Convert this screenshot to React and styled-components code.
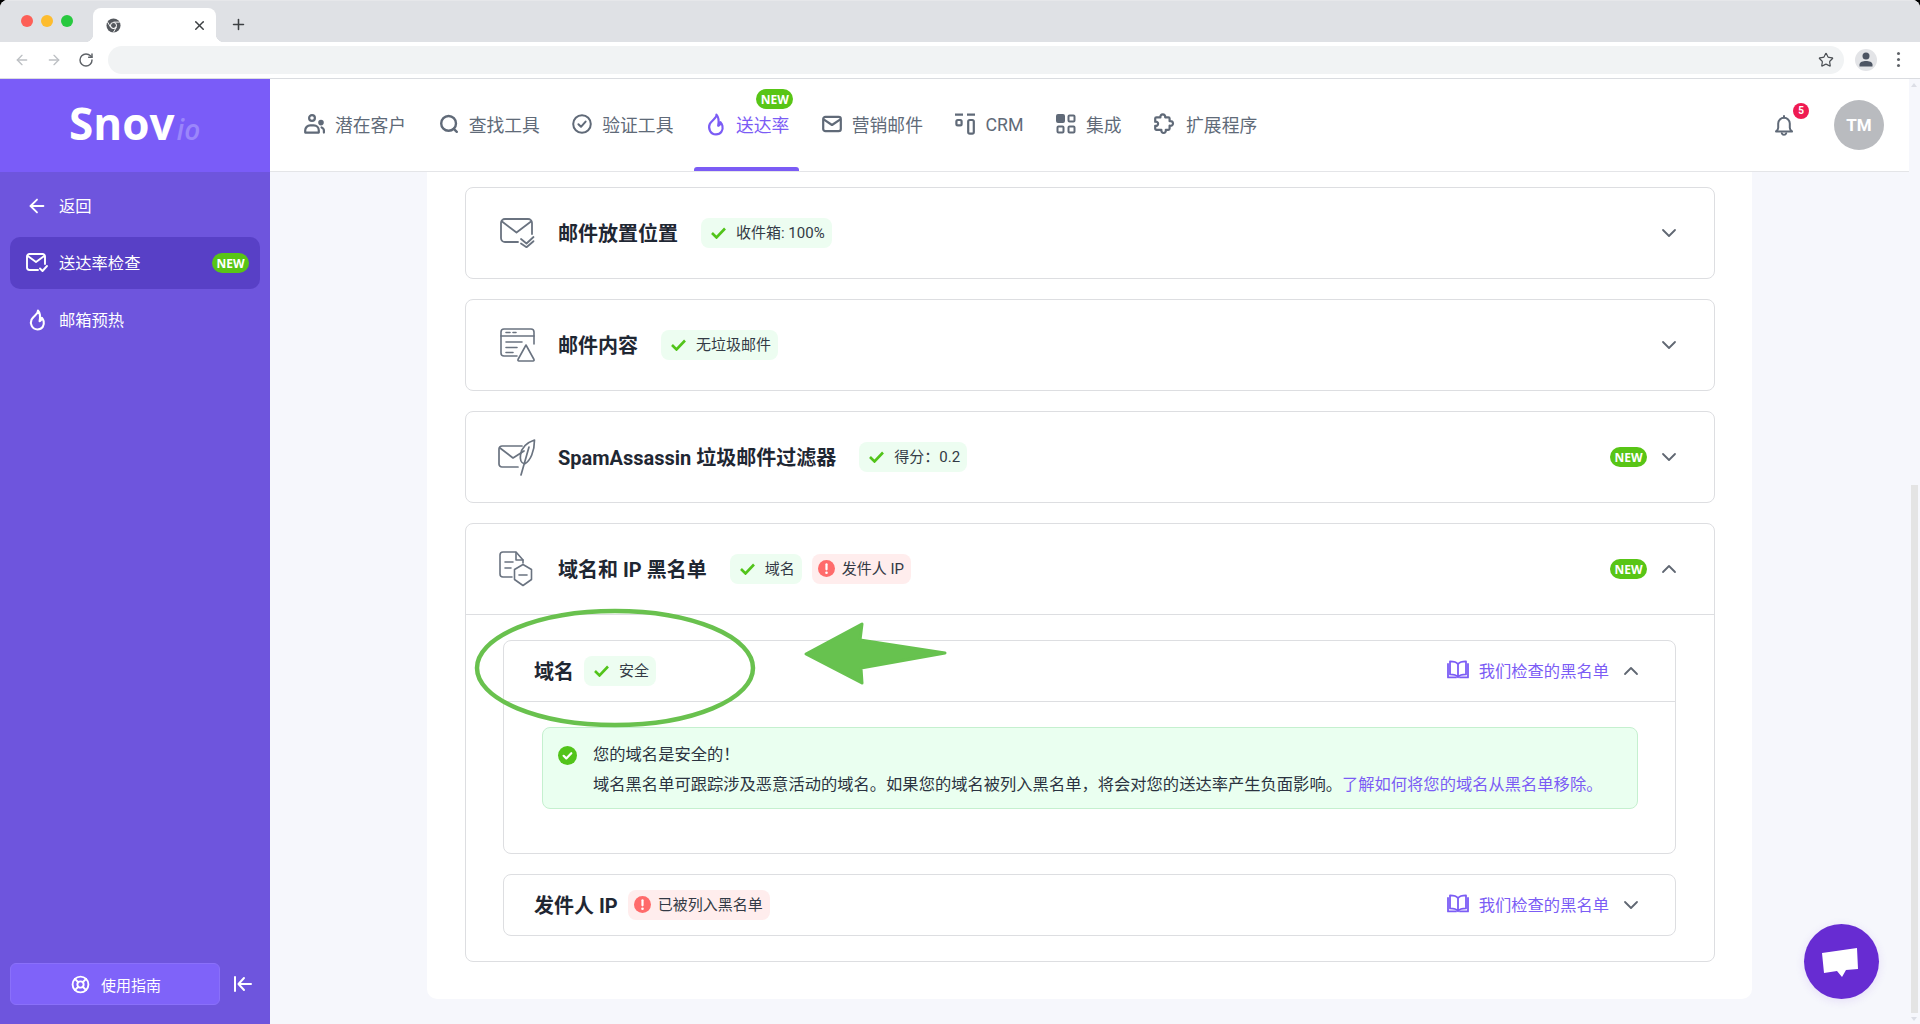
import React from "react";
import styled, { createGlobalStyle } from "styled-components";
import {
  ArrowLeft,
  ChevronDown,
  ChevronUp,
  LifeBuoy,
  Plus,
  RotateCw,
  Star,
  X,
} from "lucide-react";

const GlobalStyle = createGlobalStyle`
  html, body {
    margin: 0;
    padding: 0;
    background: #000;
    overflow: hidden;
  }
  body {
    font-family: Roboto, "Noto Sans CJK SC", "Noto Sans", sans-serif;
    color: #1f2733;
  }
  * { box-sizing: border-box; }
`;

const Window = styled.div`
  position: relative;
  width: 1920px;
  height: 1024px;
  display: flex;
  flex-direction: column;
  overflow: hidden;
  border-radius: 8px 8px 0 0;
  background: #fff;
`;

/* browser chrome */
const TabStrip = styled.div`
  height: 42px;
  flex: none;
  display: flex;
  align-items: flex-end;
  background: #dfe1e5;
  border-top: 1px solid #e6e7ea;
`;

const Lights = styled.div`
  display: flex;
  gap: 8px;
  padding: 0 0 15px 21px;
  width: 93px;
`;

const Light = styled.span`
  width: 12px;
  height: 12px;
  border-radius: 50%;
  background: ${(p) => p.$color};
`;

const Tab = styled.div`
  position: relative;
  width: 123px;
  height: 34px;
  display: flex;
  align-items: center;
  justify-content: space-between;
  padding: 0 9px 0 13px;
  background: #fff;
  border-radius: 8px 8px 0 0;
  color: #3c4043;

  &::before,
  &::after {
    content: "";
    position: absolute;
    bottom: 0;
    width: 8px;
    height: 8px;
  }
  &::before {
    left: -8px;
    background: radial-gradient(circle at 0 0, #dfe1e5 8px, #fff 8.5px);
  }
  &::after {
    right: -8px;
    background: radial-gradient(circle at 100% 0, #dfe1e5 8px, #fff 8.5px);
  }
`;

const NewTab = styled.div`
  margin: 0 0 9px 14px;
  display: flex;
  color: #3c4043;
`;

const ToolBar = styled.div`
  height: 37px;
  flex: none;
  display: flex;
  align-items: center;
  padding: 0 13px 1px 14px;
  background: #fff;
  border-bottom: 1px solid #dadce0;
`;

const ToolIcons = styled.div`
  display: flex;
  gap: 16px;
  width: 94px;
`;

const ToolIcon = styled.span`
  display: flex;
  color: ${(p) => (p.$dim ? "#bdc0c4" : "#5f6368")};
`;

const AddressBar = styled.div`
  flex: none;
  width: 1736px;
  height: 28px;
  display: flex;
  align-items: center;
  justify-content: flex-end;
  padding-right: 10px;
  border-radius: 14px;
  background: #f1f3f4;
  color: #4b4f54;
`;

const Profile = styled.div`
  width: 22px;
  height: 22px;
  margin-left: 11px;
  flex: none;
  display: flex;
  align-items: center;
  justify-content: center;
  border-radius: 50%;
  background: #e3e4e7;
`;

const Dots = styled.div`
  display: flex;
  flex-direction: column;
  gap: 3px;
  margin-left: 20px;
`;

const Dot = styled.span`
  width: 3px;
  height: 3px;
  border-radius: 50%;
  background: #5f6368;
`;

/* page */
const Page = styled.div`
  flex: 1;
  min-height: 0;
  display: flex;
`;

const Sidebar = styled.aside`
  width: 270px;
  flex: none;
  display: flex;
  flex-direction: column;
  background: #6e55dd;
  color: #fff;
`;

const LogoBar = styled.div`
  height: 93px;
  flex: none;
  display: flex;
  align-items: baseline;
  padding: 16px 0 0 69px;
  background: #7a5cf8;
  font-family: "Open Sans", sans-serif;
`;

const LogoMain = styled.span`
  font-size: 44px;
  font-weight: 700;
  line-height: 56px;
`;

const LogoSub = styled.span`
  margin-left: 2px;
  font-size: 28px;
  font-weight: 600;
  font-style: italic;
  color: #9b86fb;
`;

const SideNav = styled.nav`
  flex: 1;
  display: flex;
  flex-direction: column;
  padding: 8px 10px 0;
  gap: 5px;
`;

const SideItem = styled.div`
  height: 52px;
  display: flex;
  align-items: center;
  gap: 11px;
  padding: 0 11px 0 16px;
  border-radius: 10px;
  font-size: 16.3px;
  background: ${(p) => (p.$active ? "#5840c6" : "transparent")};
`;

const SideIcon = styled.span`
  width: 22px;
  flex: none;
  display: flex;
  justify-content: center;
`;

const SideLabel = styled.span`
  flex: 1;
  padding-bottom: 2px;
  white-space: nowrap;
`;

const SideFoot = styled.div`
  display: flex;
  align-items: center;
  gap: 14px;
  padding: 0 0 19px 10px;
`;

const GuideButton = styled.div`
  width: 210px;
  height: 42px;
  display: flex;
  align-items: center;
  justify-content: center;
  gap: 11px;
  padding-left: 2px;
  border-radius: 6px;
  border: 1px solid #8a70fa;
  background: #7f63f9;
  font-size: 15px;
`;

const NewPill = styled.span`
  width: 37px;
  height: 20px;
  flex: none;
  display: flex;
  align-items: center;
  justify-content: center;
  border-radius: 10px;
  background: #58c516;
  color: #fff;
  font-family: "Open Sans", sans-serif;
  font-size: 12px;
  font-weight: 700;
`;

const Content = styled.div`
  flex: 1;
  min-width: 0;
  display: flex;
  flex-direction: column;
`;

const TopNav = styled.header`
  height: 93px;
  flex: none;
  display: flex;
  align-items: stretch;
  gap: 6.5px;
  padding: 0 25px 0 21px;
  background: #fff;
  border-bottom: 1px solid #e4e5e8;
`;

const NavItem = styled.div`
  position: relative;
  display: flex;
  align-items: center;
  gap: 10px;
  padding: 0 13px 2px;
  font-size: 17.8px;
  color: ${(p) => (p.$active ? "#7b5cf5" : "#606a78")};
  white-space: nowrap;

  ${(p) =>
    p.$active &&
    `&::after {
      content: "";
      position: absolute;
      left: 1px;
      right: 3px;
      bottom: 0;
      height: 4px;
      border-radius: 3px 3px 0 0;
      background: #7b5cf5;
    }`}
`;

const NavBadge = styled(NewPill)`
  position: absolute;
  top: 10px;
  right: 9px;
`;

const NavRight = styled.div`
  margin-left: auto;
  display: flex;
  align-items: center;
  gap: 41px;
`;

const Bell = styled.div`
  position: relative;
  display: flex;
  color: #606a78;
`;

const BellCount = styled.span`
  position: absolute;
  top: -12px;
  left: 18px;
  width: 16px;
  height: 16px;
  display: flex;
  align-items: center;
  justify-content: center;
  border-radius: 50%;
  background: #ef1b52;
  color: #fff;
  font-size: 10px;
  font-weight: 700;
`;

const Avatar = styled.div`
  width: 50px;
  height: 50px;
  display: flex;
  align-items: center;
  justify-content: center;
  border-radius: 50%;
  background: #b9bbbf;
  color: #fff;
  font-size: 17px;
  font-weight: 700;
`;

const Main = styled.main`
  flex: 1;
  min-height: 0;
  padding-left: 157px;
  background: #f6f7fc;
`;

const Panel = styled.section`
  width: 1325px;
  display: flex;
  flex-direction: column;
  gap: 20px;
  padding: 15px 37px 37px 38px;
  border-radius: 0 0 10px 10px;
  background: #fff;
`;

const Card = styled.div`
  border: 1px solid #dddee1;
  border-radius: 8px;
  background: #fff;
`;

const CardHead = styled.div`
  height: ${(p) => p.$height || 90}px;
  display: flex;
  align-items: center;
  padding: ${(p) => p.$pad || "0 33px 0 33px"};
  border-bottom: ${(p) => (p.$open ? "1px solid #dddee1" : "0")};
`;

const CardIcon = styled.span`
  width: 37px;
  height: 40px;
  margin-right: 22px;
  flex: none;
  display: flex;
  align-items: center;
  justify-content: center;
  color: #6a7380;
`;

const Title = styled.h3`
  margin: 0 ${(p) => p.$gap || 23}px 2px 0;
  font-size: 20px;
  font-weight: 700;
  white-space: nowrap;
  color: #1f2733;
`;

const Badges = styled.div`
  display: flex;
  gap: 10px;
`;

const Badge = styled.span`
  height: 30px;
  display: flex;
  align-items: center;
  gap: ${(p) => (p.$bad ? 7 : 10)}px;
  padding: 0 7px 3px ${(p) => (p.$bad ? 6 : 10)}px;
  border-radius: 8px;
  background: ${(p) => (p.$bad ? "#ffeded" : "#edfdf1")};
  font-size: 15px;
  color: #333a45;
  white-space: nowrap;

  svg {
    position: relative;
    top: 1px;
    flex: none;
  }
`;

const Right = styled.div`
  margin-left: auto;
  display: flex;
  align-items: center;
  gap: 10px;
  color: #606772;
`;

const BlackList = styled.span`
  display: flex;
  align-items: center;
  gap: 10px;
  padding-bottom: 3px;
  color: #7b5cf5;
  font-size: 16.3px;
  white-space: nowrap;
`;

const CardBody = styled.div`
  display: flex;
  flex-direction: column;
  gap: 20px;
  padding: 25px 38px 25px 37px;
`;

const InnerBody = styled.div`
  padding: 25px 37px 44px 38px;
`;

const Alert = styled.div`
  height: 82px;
  display: flex;
  gap: 16px;
  padding: 12px 15px;
  border: 1px solid #c5f0cf;
  border-radius: 8px;
  background: #eafff0;
`;

const AlertIcon = styled.span`
  flex: none;
  display: flex;
  height: 30px;
  align-items: center;
`;

const AlertText = styled.p`
  margin: 0;
  font-size: 16.3px;
  line-height: 30px;
  color: #2b3340;
  white-space: nowrap;
`;

const Link = styled.a`
  color: #7b5cf5;
`;

const Scrollbar = styled.div`
  position: relative;
  width: 11px;
  flex: none;
  padding: 406px 2px 11px 2px;
  background: #f6f7fc;

  &::before,
  &::after {
    content: "";
    position: absolute;
    left: 2px;
    border-left: 3.5px solid transparent;
    border-right: 3.5px solid transparent;
  }
  &::before {
    top: 4px;
    border-bottom: 4px solid #dcdee6;
  }
  &::after {
    bottom: 3px;
    border-top: 4px solid #dcdee6;
  }
`;

const Thumb = styled.div`
  height: 100%;
  background: #e4e4e4;
`;

/* things laid over the page */
const Annotation = styled.svg`
  position: absolute;
  top: 600px;
  left: 470px;
  pointer-events: none;
`;

const ChatButton = styled.div`
  position: absolute;
  top: 924px;
  left: 1804px;
  width: 75px;
  height: 75px;
  border-radius: 50%;
  background: #672cd2;
  box-shadow: 0 2px 10px rgba(103, 44, 210, 0.12);
`;

const stroke = {
  fill: "none",
  stroke: "currentColor",
  strokeLinecap: "round",
  strokeLinejoin: "round",
  overflow: "visible",
};

function ChromeIcon() {
  return (
    <svg width="15" height="15" viewBox="0 0 16 16">
      <circle cx="8" cy="8" r="7.5" fill="#55595e" />
      <circle cx="8" cy="8" r="3.6" fill="#fff" />
      <circle cx="8" cy="8" r="2.6" fill="#55595e" />
      <path d="M8 4.4h6.6M4.9 9.8 1.6 4.2M11.1 9.8 7.8 15.4" stroke="#fff" strokeWidth="1" />
    </svg>
  );
}

function PeopleIcon() {
  return (
    <svg width="21" height="20" viewBox="0 0 21 20" {...stroke} strokeWidth="2.2">
      <circle cx="8" cy="4" r="2.9" />
      <path d="M1.2 18.6v-2.2A5 5 0 0 1 6.2 11.4h3.6a5 5 0 0 1 5 5v2.2z" />
      <circle cx="17" cy="8.6" r="1.7" fill="currentColor" />
      <path d="M17.6 13.4c1.5.6 2.3 1.8 2.3 3.2v2" />
    </svg>
  );
}

function SearchIcon() {
  return (
    <svg width="20" height="20" viewBox="0 0 20 20" {...stroke} strokeWidth="2.4">
      <circle cx="9.6" cy="9.4" r="7.4" />
      <path d="m14.8 14.8 3 3" />
    </svg>
  );
}

function CheckCircleIcon() {
  return (
    <svg width="20" height="20" viewBox="0 0 20 20" {...stroke} strokeWidth="2">
      <circle cx="10" cy="10" r="8.8" />
      <path d="m6.4 10.2 2.6 2.6 4.6-5.2" />
    </svg>
  );
}

function FlameIcon({ size = 20, height = 23 }) {
  return (
    <svg width={size} height={height} viewBox="0 0 16 20" {...stroke} strokeWidth="1.9">
      <path d="M8.4 1.4c.5 3-4 4.600-5.800 8.200C1 13 2.800 18.600 8 18.600c4.500 0 6.400-3.800 5.600-7.400-.3-1.300-.9-2.300-1.700-3.200-.1 1.600-.8 2.700-2 3.100C10.600 7.600 10.400 3.600 8.400 1.400z" />
    </svg>
  );
}

function MailIcon() {
  return (
    <svg width="20" height="20" viewBox="0 0 20 20" {...stroke} strokeWidth="2.2">
      <rect x="1.200" y="2.800" width="17.600" height="14.400" rx="2.200" />
      <path d="m2 5.600 8 5.400 8-5.400" />
    </svg>
  );
}

function CrmIcon() {
  return (
    <svg width="20" height="22" viewBox="0 0 20 22" fill="none" stroke="currentColor" strokeWidth="2.200">
      <path d="M0 1.600h8M12 1.600h8" />
      <rect x="1.400" y="7" width="5.200" height="5.400" rx="1.400" />
      <rect x="13.200" y="7" width="5.600" height="13.600" rx="1.600" />
    </svg>
  );
}

function GridIcon() {
  return (
    <svg width="20" height="20" viewBox="0 0 20 20" fill="none" stroke="currentColor" strokeWidth="2">
      <rect x="1" y="1" width="7" height="7" rx="1" fill="currentColor" />
      <rect x="12.500" y="1.500" width="6" height="6" rx="1" />
      <rect x="1.500" y="12.500" width="6" height="6" rx="1" />
      <rect x="12.500" y="12.500" width="6" height="6" rx="1" />
    </svg>
  );
}

function PuzzleIcon() {
  return (
    <svg width="22" height="22" viewBox="1 0 20 22" {...stroke} strokeWidth="2.200">
      <path d="M8.800 1.400c1.600 0 2.600 1.200 2.400 3h3.200c.7 0 1.200.5 1.200 1.200v2.600c2-.5 3.400.6 3.400 2.200s-1.400 2.800-3.400 2.200v3c0 .7-.5 1.200-1.200 1.200h-2.600c.4 2-.8 3.200-2.200 3.200s-2.600-1.200-2.200-3.200H2.400c-.7 0-1.200-.5-1.200-1.200v-2.800c1.600.4 2.900-.5 2.900-2S2.800 8.400 1.200 8.800V5.600c0-.7.500-1.200 1.200-1.200h4c-.2-1.800.8-3 2.400-3z" />
    </svg>
  );
}

function BellIcon() {
  return (
    <svg width="18" height="21" viewBox="0 0 18 21" {...stroke} strokeWidth="2">
      <path d="M1 16.400c1.400-.8 2.200-2 2.200-3.600V8.600a5.800 5.800 0 0 1 11.600 0v4.200c0 1.600.8 2.800 2.200 3.600z" />
      <path d="M9 1v1.600M6.800 18.200a2.300 2.300 0 0 0 4.400 0" />
    </svg>
  );
}

function MailCheckIcon({ size = 35 }) {
  return (
    <svg width={size} height={(size * 30) / 35} viewBox="0 0 35 30" {...stroke} strokeWidth="1.800">
      <path d="M18 24H5a4 4 0 0 1-4-4V5a4 4 0 0 1 4-4h23a4 4 0 0 1 4 4v11" />
      <path d="m2 3.500 14.500 11L31 3.500" />
      <path d="m21 21 5.500 4.500 7-6.500M21 25.500l5.500 3.700 7-6" />
    </svg>
  );
}

function ContentIcon() {
  return (
    <svg width="35" height="34" viewBox="0 0 35 34" {...stroke} strokeWidth="1.600">
      <path d="M17 28H4a3 3 0 0 1-3-3V4a3 3 0 0 1 3-3h27a3 3 0 0 1 3 3v12" />
      <path d="M1 8h33M6 4.500h4M13 4.500h3M6 14h16M6 19.500h11M6 24.500h7" />
      <path d="m26 17 8 14.500a1 1 0 0 1-1 1.500H19a1 1 0 0 1-1-1.500z" />
    </svg>
  );
}

function FeatherMailIcon() {
  return (
    <svg width="38" height="37" viewBox="1 0 38 37" {...stroke} strokeWidth="1.700">
      <path d="M20 28H4a3 3 0 0 1-3-3V10a3 3 0 0 1 3-3h20" />
      <path d="m2 9 13 10 11-7" />
      <path d="M36.500 1c-6 2-13 6-14 15-.6 4 .5 8 4 9 6-3 10-13 10-24zM31 8 23 36" />
    </svg>
  );
}

function ShieldDocIcon() {
  return (
    <svg width="34" height="36" viewBox="2 0 34 36" {...stroke} strokeWidth="1.600">
      <path d="M13 26H4a3 3 0 0 1-3-3V4a3 3 0 0 1 3-3h13l7 8v3" />
      <path d="M17 1.500V9h7M6 11h8M6 17h6" />
      <path d="m24 13.500 8.500 5v10L24 34.500l-8.500-6v-10z" />
      <path d="M20 24h8" />
    </svg>
  );
}

function BadIcon() {
  return (
    <svg width="17" height="17" viewBox="0 0 17 17">
      <circle cx="8.500" cy="8.500" r="8.500" fill="#ff6b6b" />
      <rect x="7.400" y="3.200" width="2.200" height="7.200" rx="1.100" fill="#fff" />
      <circle cx="8.500" cy="12.800" r="1.300" fill="#fff" />
    </svg>
  );
}

function OkIcon() {
  return (
    <svg width="19" height="19" viewBox="0 0 19 19">
      <circle cx="9.500" cy="9.500" r="9.500" fill="#52c41a" />
      <path d="m5.600 9.800 2.700 2.600 5-5.200" fill="none" stroke="#fff" strokeWidth="2.200" strokeLinecap="round" strokeLinejoin="round" />
    </svg>
  );
}

function BookIcon() {
  return (
    <svg width="22" height="19" viewBox="0 0 22 19" {...stroke} strokeWidth="1.800">
      <path d="M11 4.200C9.500 2.200 7 1.400 3 1.400v13c4 0 6.500.8 8 2.800 1.500-2 4-2.800 8-2.800v-13c-4 0-6.500.8-8 2.800zM11 4.200v13" />
      <path d="M1 4v13.400h8M21 4v13.400h-8" />
    </svg>
  );
}

function CollapseIcon() {
  return (
    <svg width="18" height="16" viewBox="0 0 18 16" {...stroke} strokeWidth="2">
      <path d="M1 1v14M17 8H5M10 2 4.500 8l5.500 6" />
    </svg>
  );
}

function MiniMailIcon() {
  return (
    <svg width="22" height="20" viewBox="0 0 22 20" {...stroke} strokeWidth="1.900">
      <path d="M12 17H3.500A2.500 2.500 0 0 1 1 14.500v-11A2.500 2.500 0 0 1 3.500 1h13A2.500 2.500 0 0 1 19 3.500V11" />
      <path d="m1.800 3 8.200 6 8.200-6M14 15.500l2.500 2.500 4.500-5" />
    </svg>
  );
}

const GreenCheck = () => (
  <svg width="15" height="12" viewBox="0 0 15 12" fill="none" stroke="#52c41a" strokeWidth="2.600">
    <path d="m1 6 4.500 4.500L14 1.500" />
  </svg>
);

const checks = [
  { title: "邮件放置位置", icon: <MailCheckIcon />, badge: "收件箱: 100%" },
  { title: "邮件内容", icon: <ContentIcon />, badge: "无垃圾邮件" },
  { title: "SpamAssassin 垃圾邮件过滤器", icon: <FeatherMailIcon />, badge: "得分：0.2", isNew: true },
];

const navItems = [
  { label: "潜在客户", icon: <PeopleIcon /> },
  { label: "查找工具", icon: <SearchIcon /> },
  { label: "验证工具", icon: <CheckCircleIcon /> },
  { label: "送达率", icon: <FlameIcon />, active: true },
  { label: "营销邮件", icon: <MailIcon /> },
  { label: "CRM", icon: <CrmIcon /> },
  { label: "集成", icon: <GridIcon /> },
  { label: "扩展程序", icon: <PuzzleIcon /> },
];

export default function App() {
  return (
    <Window>
      <GlobalStyle />
      <TabStrip>
        <Lights>
          <Light $color="#fd5f57" />
          <Light $color="#fdbc2e" />
          <Light $color="#28c93f" />
        </Lights>
        <Tab>
          <ChromeIcon />
          <X size={15} strokeWidth={2.400} />
        </Tab>
        <NewTab>
          <Plus size={17} strokeWidth={2.200} />
        </NewTab>
      </TabStrip>
      <ToolBar>
        <ToolIcons>
          <ToolIcon $dim><ArrowLeft size={16} /></ToolIcon>
          <ToolIcon $dim><ArrowLeft size={16} style={{ transform: "scaleX(-1)" }} /></ToolIcon>
          <ToolIcon><RotateCw size={16} strokeWidth={2.200} /></ToolIcon>
        </ToolIcons>
        <AddressBar>
          <Star size={16} strokeWidth={1.800} />
        </AddressBar>
        <Profile>
          <svg width="14" height="15" viewBox="0 0 14 15" fill="#4d5563">
            <circle cx="7" cy="4" r="3.500" />
            <path d="M0.500 14.500v-2c0-2.500 3.500-3.600 6.500-3.600s6.500 1.100 6.500 3.600v2z" />
          </svg>
        </Profile>
        <Dots><Dot /><Dot /><Dot /></Dots>
      </ToolBar>

      <Page>
        <Sidebar>
          <LogoBar>
            <LogoMain>Snov</LogoMain>
            <LogoSub>io</LogoSub>
          </LogoBar>
          <SideNav>
            <SideItem>
              <SideIcon><ArrowLeft size={24} strokeWidth={2} /></SideIcon>
              <SideLabel>返回</SideLabel>
            </SideItem>
            <SideItem $active>
              <SideIcon><MiniMailIcon /></SideIcon>
              <SideLabel>送达率检查</SideLabel>
              <NewPill>NEW</NewPill>
            </SideItem>
            <SideItem>
              <SideIcon><FlameIcon size={19} height={22} /></SideIcon>
              <SideLabel>邮箱预热</SideLabel>
            </SideItem>
          </SideNav>
          <SideFoot>
            <GuideButton>
              <LifeBuoy size={19} strokeWidth={2.400} />
              使用指南
            </GuideButton>
            <CollapseIcon />
          </SideFoot>
        </Sidebar>

        <Content>
          <TopNav>
            {navItems.map((item) => (
              <NavItem key={item.label} $active={item.active}>
                {item.icon}
                {item.label}
                {item.active && <NavBadge>NEW</NavBadge>}
              </NavItem>
            ))}
            <NavRight>
              <Bell>
                <BellIcon />
                <BellCount>5</BellCount>
              </Bell>
              <Avatar>TM</Avatar>
            </NavRight>
          </TopNav>

          <Main>
            <Panel>
              {checks.map((c) => (
                <Card key={c.title}>
                  <CardHead>
                    <CardIcon>{c.icon}</CardIcon>
                    <Title>{c.title}</Title>
                    <Badge><GreenCheck />{c.badge}</Badge>
                    <Right>
                      {c.isNew && <NewPill>NEW</NewPill>}
                      <ChevronDown size={24} strokeWidth={1.800} />
                    </Right>
                  </CardHead>
                </Card>
              ))}

              <Card>
                <CardHead $open $height={91}>
                  <CardIcon><ShieldDocIcon /></CardIcon>
                  <Title>域名和 IP 黑名单</Title>
                  <Badges>
                    <Badge><GreenCheck />域名</Badge>
                    <Badge $bad><BadIcon />发件人 IP</Badge>
                  </Badges>
                  <Right>
                    <NewPill>NEW</NewPill>
                    <ChevronUp size={24} strokeWidth={1.800} />
                  </Right>
                </CardHead>
                <CardBody>
                  <Card>
                    <CardHead $open $height={61} $pad="0 32px 0 30px">
                      <Title $gap={10}>域名</Title>
                      <Badge><GreenCheck />安全</Badge>
                      <Right>
                        <BlackList><BookIcon />我们检查的黑名单</BlackList>
                        <ChevronUp size={24} strokeWidth={1.800} />
                      </Right>
                    </CardHead>
                    <InnerBody>
                      <Alert>
                        <AlertIcon><OkIcon /></AlertIcon>
                        <AlertText>
                          您的域名是安全的！
                          <br />
                          域名黑名单可跟踪涉及恶意活动的域名。如果您的域名被列入黑名单，将会对您的送达率产生负面影响。
                          <Link>了解如何将您的域名从黑名单移除。</Link>
                        </AlertText>
                      </Alert>
                    </InnerBody>
                  </Card>
                  <Card>
                    <CardHead $height={60} $pad="0 32px 0 30px">
                      <Title $gap={10}>发件人 IP</Title>
                      <Badge $bad><BadIcon />已被列入黑名单</Badge>
                      <Right>
                        <BlackList><BookIcon />我们检查的黑名单</BlackList>
                        <ChevronDown size={24} strokeWidth={1.800} />
                      </Right>
                    </CardHead>
                  </Card>
                </CardBody>
              </Card>
            </Panel>
          </Main>
        </Content>
        <Scrollbar><Thumb /></Scrollbar>
      </Page>

      <Annotation width="490" height="140" viewBox="470 600 490 140">
        <ellipse cx="615" cy="668" rx="138" ry="57" fill="none" stroke="#69c14e" strokeWidth="4.500" />
        <path
          d="M806 654 862 624 860 640 945 653 861 668 862 683z"
          fill="#67c24f"
          stroke="#67c24f"
          strokeWidth="3"
          strokeLinejoin="round"
        />
      </Annotation>

      <ChatButton>
        <svg width="75" height="75" viewBox="1804 925 75 75">
          <path d="M1822 954 1857 949 1858 970 1846 971 1842 978 1837 972 1824 974z" fill="#fff" />
        </svg>
      </ChatButton>
    </Window>
  );
}
